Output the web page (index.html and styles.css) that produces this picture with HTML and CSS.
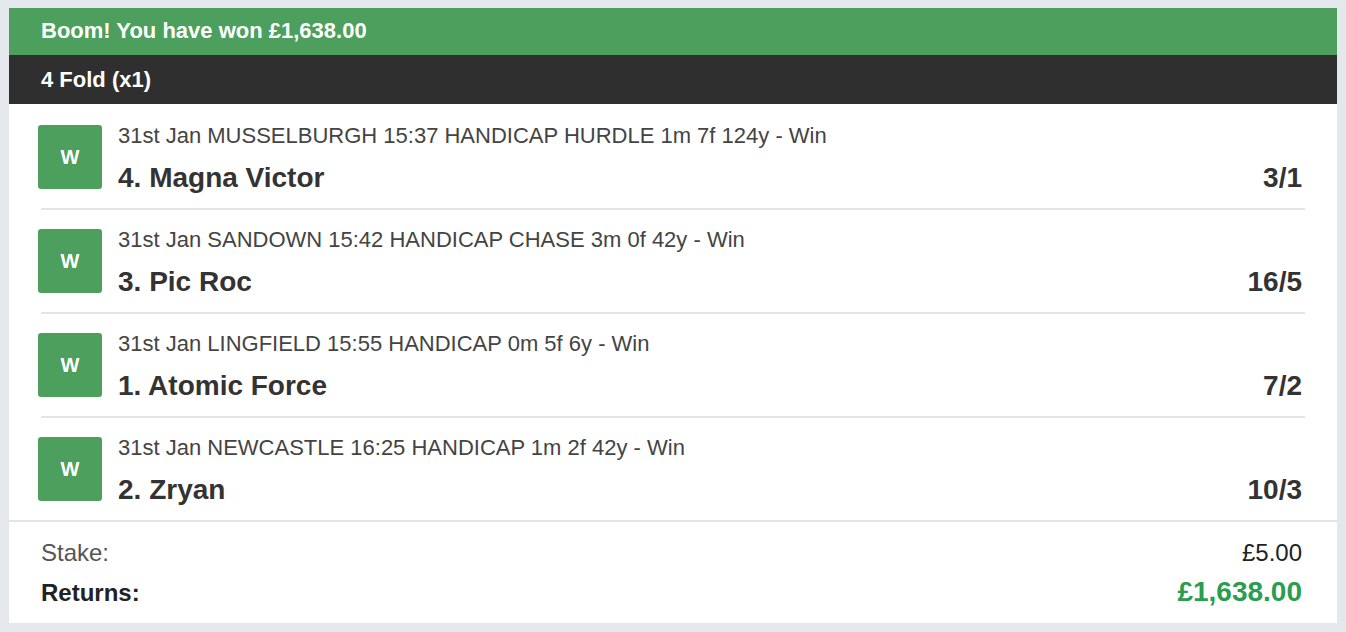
FILE: index.html
```html
<!DOCTYPE html>
<html lang="en">
<head>
<meta charset="utf-8">
<title>Bet receipt</title>
<link rel="stylesheet" href="styles.css">
</head>
<body>
<div class="card">
  <div class="banner">Boom! You have won £1,638.00</div>
  <div class="bet-type">4 Fold (x1)</div>
  <div class="legs">
    <div class="leg">
      <div class="result">W</div>
      <div class="info">
        <div class="meta">31st Jan MUSSELBURGH 15:37 HANDICAP HURDLE 1m 7f 124y - Win</div>
        <div class="line"><span class="name">4. Magna Victor</span><span class="odds">3/1</span></div>
      </div>
    </div>
    <div class="leg">
      <div class="result">W</div>
      <div class="info">
        <div class="meta">31st Jan SANDOWN 15:42 HANDICAP CHASE 3m 0f 42y - Win</div>
        <div class="line"><span class="name">3. Pic Roc</span><span class="odds">16/5</span></div>
      </div>
    </div>
    <div class="leg">
      <div class="result">W</div>
      <div class="info">
        <div class="meta">31st Jan LINGFIELD 15:55 HANDICAP 0m 5f 6y - Win</div>
        <div class="line"><span class="name">1. Atomic Force</span><span class="odds">7/2</span></div>
      </div>
    </div>
    <div class="leg">
      <div class="result">W</div>
      <div class="info">
        <div class="meta">31st Jan NEWCASTLE 16:25 HANDICAP 1m 2f 42y - Win</div>
        <div class="line"><span class="name">2. Zryan</span><span class="odds">10/3</span></div>
      </div>
    </div>
  </div>
  <div class="summary">
    <div class="sum-row stake"><span class="label">Stake:</span><span class="value">£5.00</span></div>
    <div class="sum-row returns"><span class="label">Returns:</span><span class="value">£1,638.00</span></div>
  </div>
</div>
</body>
</html>
```

FILE: styles.css
```css
html, body {
  background: #e4e8ec;
}
body {
  margin: 8px 9px 0 9px;
  font-family: "Liberation Sans", Arial, Helvetica, sans-serif;
}
.card {
  background: #ffffff;
  box-shadow: 0 2px 4px rgba(0, 0, 0, 0.14);
}
.banner {
  background: #4c9f5c;
  color: #ffffff;
  font-weight: bold;
  font-size: 22px;
  line-height: 46px;
  height: 46px;
  padding: 0 32px 1px 32px;
}
.bet-type {
  background: #2f2f2f;
  color: #ffffff;
  font-weight: bold;
  font-size: 22px;
  line-height: 49px;
  height: 49px;
  padding: 0 32px;
}
.legs {
  padding-top: 2px;
}
.leg {
  display: flex;
  align-items: flex-start;
  margin: 0 32px;
  padding: 19px 0 14px 0;
  border-bottom: 2px solid #e1e5e9;
}
.leg:last-child {
  border-bottom: none;
}
.result {
  flex: none;
  width: 64px;
  height: 64px;
  margin-left: -3px;
  margin-right: 16px;
  border-radius: 3px;
  background: #4c9f5c;
  color: #ffffff;
  font-weight: bold;
  font-size: 20px;
  display: flex;
  align-items: center;
  justify-content: center;
}
.info {
  flex: 1;
  min-width: 0;
  margin-top: -1px;
}
.meta {
  font-size: 22px;
  line-height: 24px;
  color: #444444;
}
.line {
  display: flex;
  justify-content: space-between;
  align-items: baseline;
  margin-top: 14px;
  line-height: 32px;
}
.name {
  font-size: 28px;
  font-weight: bold;
  color: #333333;
}
.odds {
  font-size: 28px;
  font-weight: bold;
  color: #333333;
  padding-right: 3px;
}
.summary {
  border-top: 2px solid #e1e5e9;
  padding: 17px 35px 14px 32px;
}
.sum-row {
  display: flex;
  justify-content: space-between;
  align-items: baseline;
}
.stake {
  font-size: 24px;
  line-height: 28px;
  margin-bottom: 9px;
}
.stake .label {
  color: #555555;
}
.stake .value {
  color: #222222;
}
.returns {
  line-height: 32px;
}
.returns .label {
  font-size: 24px;
  font-weight: bold;
  color: #222222;
}
.returns .value {
  font-size: 28px;
  font-weight: bold;
  color: #2a9d50;
}
```
